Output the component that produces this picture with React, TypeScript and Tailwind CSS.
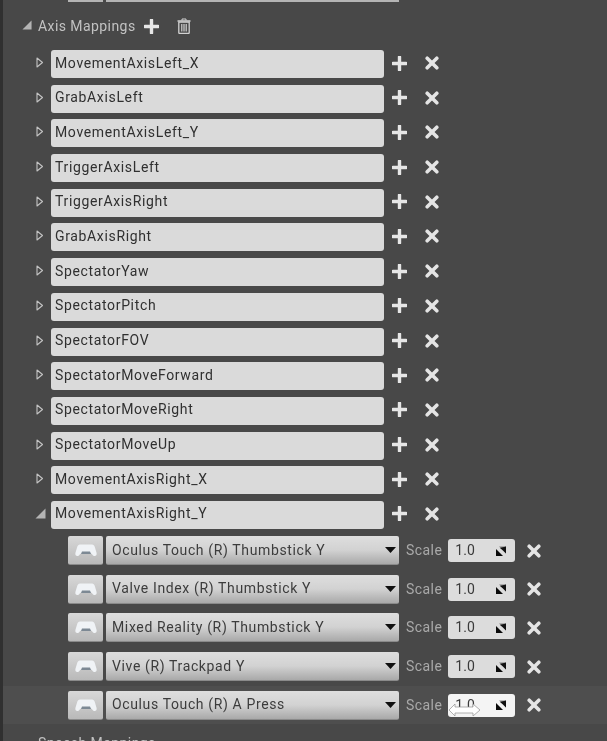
const axes = ["MovementAxisLeft_X","GrabAxisLeft","MovementAxisLeft_Y","TriggerAxisLeft","TriggerAxisRight","GrabAxisRight","SpectatorYaw","SpectatorPitch","SpectatorFOV","SpectatorMoveForward","SpectatorMoveRight","SpectatorMoveUp","MovementAxisRight_X","MovementAxisRight_Y"];
const subs = ["Oculus Touch (R) Thumbstick Y","Valve Index (R) Thumbstick Y","Mixed Reality (R) Thumbstick Y","Vive (R) Trackpad Y","Oculus Touch (R) A Press"];

function Plus({ className = "" }: { className?: string }) {
  return (
    <svg width="15" height="15" viewBox="0 0 15 15" className={className}>
      <path d="M7.5 1v13M1 7.5h13" stroke="#e6e6e6" strokeWidth="3.4" strokeLinecap="round" />
    </svg>
  );
}
function Cross() {
  return (
    <svg width="14" height="14" viewBox="0 0 14 14">
      <path d="M2.2 2.2l9.6 9.6M11.8 2.2l-9.6 9.6" stroke="#e4e4e4" strokeWidth="3.6" strokeLinecap="round" />
    </svg>
  );
}
function Trash() {
  return (
    <svg width="14" height="16" viewBox="0 0 14 16" fill="none" stroke="#d2d2d2">
      <path d="M0.5 3h13" strokeWidth="1.5" />
      <path d="M5 2.5V1h4v1.5" strokeWidth="1" />
      <path d="M1.8 4.2h10.4v10.3a1 1 0 0 1-1 1H2.8a1 1 0 0 1-1-1z" strokeWidth="1.3" />
      <path d="M4.8 6v7.5M7 6v7.5M9.2 6v7.5" strokeWidth="1.2" />
    </svg>
  );
}
function Open() {
  return (
    <svg width="8" height="11" viewBox="0 0 8 11" fill="none">
      <path d="M1 1l5.500 4.500L1 10z" stroke="#c4c4c4" strokeWidth="1.1" strokeLinejoin="round" />
    </svg>
  );
}
function Down({ size = 11 }: { size?: number }) {
  return (
    <svg width={size} height={size} viewBox="0 0 11 11">
      <path d="M10.5 0.5V10.5H0.5z" fill="#b4b4b4" />
    </svg>
  );
}
function Pad() {
  return (
    <svg width="22" height="14" viewBox="0 0 22 14">
      <path d="M5 1.500h12c1.500 0 2.300 1 2.800 2.400L21.600 10c.4 1.800-.6 3-1.900 3-1.200 0-2-.8-3-2.300H5.300c-1 1.500-1.800 2.300-3 2.300C1 13 0 11.800.4 10L2.200 3.900C2.700 2.500 3.500 1.500 5 1.500z" fill="#f0f3f6" />
      <path d="M7 8.500h8l1 2.500H6z" fill="#7d8994" />
    </svg>
  );
}
function Spin() {
  return (
    <svg width="12" height="12" viewBox="0 0 12 12">
      <path d="M4 1.500L11 1.500V8.500z" fill="#333" opacity="0.55" />
      <path d="M11 1.500V8.500L8 5.500L5 3z" fill="#111" />
      <path d="M1 4L8 11H1z" fill="#0a0a0a" />
    </svg>
  );
}
function SubRow({ label, hover }: { label: string; hover?: boolean }) {
  return (
    <div className={`flex items-center h-[38.6px] pl-[65px] ${hover ? "bg-[#4e4e4e]" : ""}`}>
      <div className="flex items-center justify-center w-[35px] h-[29px] rounded-[2px] bg-gradient-to-b from-[#d8d8d8] to-[#b9b9b9] border-b border-[#8a8a8a]">
        <Pad />
      </div>
      <div className="flex items-center justify-between w-[293px] h-[29px] ml-[3px] pl-[6px] pr-[3px] rounded-[2px] bg-gradient-to-b from-[#dedede] via-[#d2d2d2] to-[#a9a9a9] border-b border-[#8a8a8a]">
        <span className="text-[14px] tracking-[0.63px] text-[#3c3c3c]">{label}</span>
        <svg width="11" height="6" viewBox="0 0 11 6"><path d="M0 0h11L5.500 6z" fill="#101010" /></svg>
      </div>
      <span className="ml-[7px] text-[14px] tracking-[0.45px] text-[#a9a9a9]">Scale</span>
      <div className={`relative flex items-center justify-between w-[67px] h-[23px] ml-[6px] pl-[7px] pr-[8px] rounded-[3px] ${hover ? "bg-[#f4f4f4]" : "bg-[#dcdcdc]"}`}>
        <span className="text-[14px] text-[#3a3a3a]">1.0</span>
        <Spin />
      </div>
      <span className="ml-[12px] flex"><Cross /></span>
    </div>
  );
}

export default function App() {
  return (
    <div className="relative w-[607px] h-[741px] overflow-hidden bg-[#484848] font-['Roboto',sans-serif] border-l-[3px] border-[#303030] blur-[0.5px]">
      <div className="flex h-[2px] ml-[65px] gap-[3px]">
        <div className="w-[35px] h-[1.500px] bg-[#b4b4b4]" />
        <div className="w-[293px] h-[1.500px] bg-[#b4b4b4]" />
      </div>
      <div className="flex items-center h-[24px] mt-[12px] ml-[19px]">
        <span className="flex w-[16px] mb-[2px]"><Down size={10} /></span>
        <span className="text-[14px] tracking-[0.43px] text-[#c2c2c2]">Axis Mappings</span>
        <span className="flex ml-[8px]"><Plus /></span>
        <span className="flex ml-[18px]"><Trash /></span>
      </div>
      <div className="flex flex-col gap-[6.7px] mt-[12px]">
        {axes.map((name, i) => {
          const last = i === axes.length - 1;
          return (
            <div key={name} className="flex items-center h-[28px]">
              <span className="flex justify-center w-[12px] ml-[31px] mr-[5px] mb-[3px]">{last ? <Down size={11} /> : <Open />}</span>
              <div className="flex items-center w-[333px] h-[28px] pl-[4px] pb-[2px] rounded-[3px] bg-[#dadada] text-[14px] tracking-[0.65px] text-[#303030]">{name}</div>
              <span className="flex ml-[8px] mb-[2px]"><Plus /></span>
              <span className="flex ml-[18px] mb-[2px]"><Cross /></span>
            </div>
          );
        })}
      </div>
      <div className="mt-[2.500px]">
        {subs.map((s, i) => <SubRow key={s} label={s} hover={i === 4} />)}
      </div>
      <div className="ml-[35px] mt-[9px] text-[14px] tracking-[0.43px] text-[#c2c2c2] leading-[20px]">Speech Mappings</div>
      <svg className="absolute left-[445px] top-[702px]" width="33" height="16" viewBox="0 0 33 16">
        <path d="M1 8l6-6v3h18V2l7 6-7 6v-3H7v3z" fill="#fff" stroke="#8f8f8f" strokeWidth="0.7" />
      </svg>
    </div>
  );
}
